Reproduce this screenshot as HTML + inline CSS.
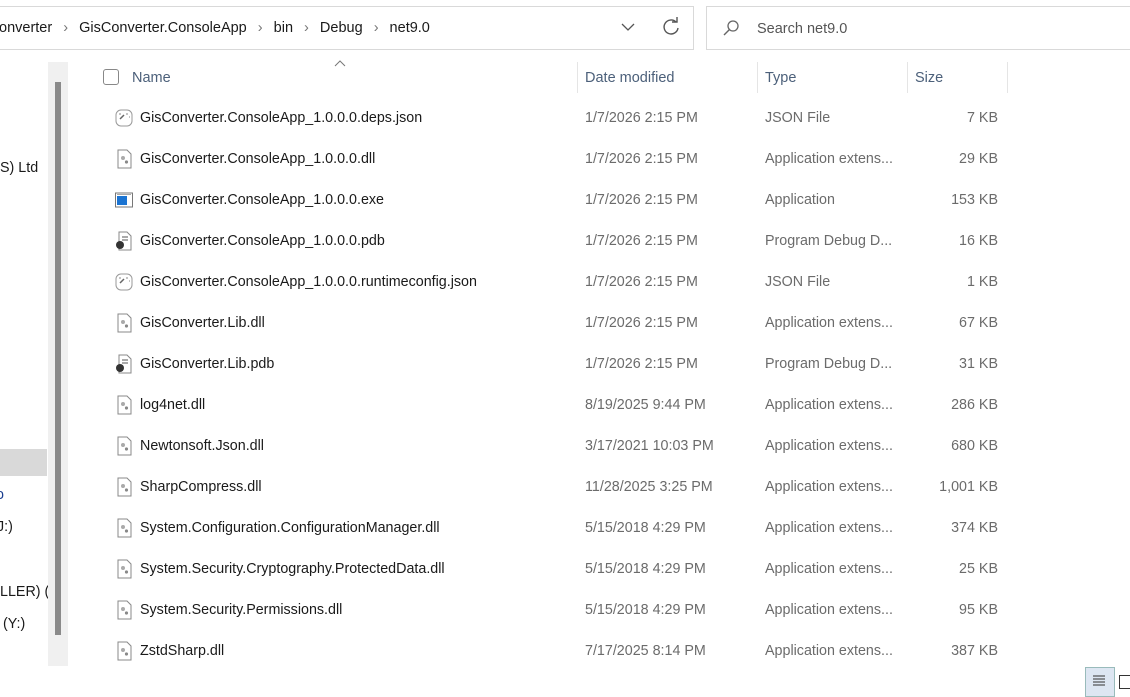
<!DOCTYPE html><html><head><style>
body{margin:0;width:1130px;height:695px;background:#fff;font-family:"Liberation Sans",sans-serif;font-size:14.3px;color:#1a1a1a;position:relative;overflow:hidden}
.a{position:absolute;white-space:nowrap}
.row{position:absolute;left:0;width:1010px;height:41px}
.row span{position:absolute;top:1px;line-height:41px}
.g{color:#6b6b6b}
.ic{position:absolute;left:115px;top:11px;width:18px;height:20px}
.s{color:#777;margin:0 7px}
</style></head><body>
<div class="a" style="left:-2px;top:6px;width:695px;height:42px;border:1px solid #d9d9d9;border-left:none"></div>
<div class="a" style="left:706px;top:6px;width:430px;height:42px;border:1px solid #d9d9d9"></div>
<div class="a" style="left:-1px;top:20px;font-size:14.5px">onverter <span class="s">›</span> GisConverter.ConsoleApp <span class="s">›</span> bin <span class="s">›</span> Debug <span class="s">›</span> net9.0</div>
<svg class="a" style="left:620px;top:20px" width="16" height="14"><path d="M2 4 L8 10 L14 4" fill="none" stroke="#555" stroke-width="1.3"/></svg>
<svg class="a" style="left:661px;top:17px" width="20" height="20"><path d="M15 5 A7 7 0 1 0 17 11" fill="none" stroke="#555" stroke-width="1.4"/><path d="M11 5 L16 5 L16 0" fill="none" stroke="#555" stroke-width="1.4"/></svg>
<svg class="a" style="left:722px;top:19px" width="18" height="18"><circle cx="11" cy="7" r="5" fill="none" stroke="#666" stroke-width="1.3"/><path d="M7.5 10.5 L2 16" stroke="#666" stroke-width="1.4"/></svg>
<div class="a" style="left:757px;top:21px;color:#555;font-size:14.5px">Search net9.0</div>
<!-- nav -->
<div class="a" style="left:0;top:160px">S) Ltd</div>
<div class="a" style="left:0;top:449px;width:47px;height:27px;background:#d9d9d9"></div>
<div class="a" style="left:-4px;top:487px;color:#1a3d8f">o</div>
<div class="a" style="left:-3px;top:519px">J:)</div>
<div class="a" style="left:0;top:584px">LLER) (S</div>
<div class="a" style="left:3px;top:616px">(Y:)</div>
<div class="a" style="left:48px;top:62px;width:20px;height:604px;background:#f0f0f0"></div>
<div class="a" style="left:55px;top:82px;width:6px;height:553px;background:#8a8a8a"></div>
<!-- header -->
<div class="a" style="left:103px;top:69px;width:14px;height:14px;border:1px solid #888;border-radius:3px"></div>
<svg class="a" style="left:334px;top:60px" width="12" height="8"><path d="M1 6 L6 1 L11 6" fill="none" stroke="#777"/></svg>
<div class="a" style="left:132px;top:70px;color:#4c607a;font-size:14.5px">Name</div>
<div class="a" style="left:585px;top:70px;color:#4c607a;font-size:14.5px">Date modified</div>
<div class="a" style="left:765px;top:70px;color:#4c607a;font-size:14.5px">Type</div>
<div class="a" style="left:915px;top:70px;color:#4c607a;font-size:14.5px">Size</div>
<div class="a" style="left:577px;top:62px;width:1px;height:31px;background:#e5e5e5"></div>
<div class="a" style="left:757px;top:62px;width:1px;height:31px;background:#e5e5e5"></div>
<div class="a" style="left:907px;top:62px;width:1px;height:31px;background:#e5e5e5"></div>
<div class="a" style="left:1007px;top:62px;width:1px;height:31px;background:#e5e5e5"></div>
<div id="rows"></div>
<div class="a" style="left:1085px;top:667px;width:28px;height:28px;background:#dde6f2;border:1px solid #9bb"></div>
<svg class="a" style="left:1091px;top:673px" width="16" height="16"><path d="M2 3H14M2 6H14M2 9H14M2 12H14" stroke="#333"/></svg>
<div class="a" style="left:1119px;top:675px;width:11px;height:12px;border:1px solid #333"></div>
<script>
const d=[["GisConverter.ConsoleApp_1.0.0.0.deps.json","1/7/2026 2:15 PM","JSON File","7 KB","j"],
["GisConverter.ConsoleApp_1.0.0.0.dll","1/7/2026 2:15 PM","Application extens...","29 KB","d"],
["GisConverter.ConsoleApp_1.0.0.0.exe","1/7/2026 2:15 PM","Application","153 KB","e"],
["GisConverter.ConsoleApp_1.0.0.0.pdb","1/7/2026 2:15 PM","Program Debug D...","16 KB","p"],
["GisConverter.ConsoleApp_1.0.0.0.runtimeconfig.json","1/7/2026 2:15 PM","JSON File","1 KB","j"],
["GisConverter.Lib.dll","1/7/2026 2:15 PM","Application extens...","67 KB","d"],
["GisConverter.Lib.pdb","1/7/2026 2:15 PM","Program Debug D...","31 KB","p"],
["log4net.dll","8/19/2025 9:44 PM","Application extens...","286 KB","d"],
["Newtonsoft.Json.dll","3/17/2021 10:03 PM","Application extens...","680 KB","d"],
["SharpCompress.dll","11/28/2025 3:25 PM","Application extens...","1,001 KB","d"],
["System.Configuration.ConfigurationManager.dll","5/15/2018 4:29 PM","Application extens...","374 KB","d"],
["System.Security.Cryptography.ProtectedData.dll","5/15/2018 4:29 PM","Application extens...","25 KB","d"],
["System.Security.Permissions.dll","5/15/2018 4:29 PM","Application extens...","95 KB","d"],
["ZstdSharp.dll","7/17/2025 8:14 PM","Application extens...","387 KB","d"]];
const ic={
j:'<svg class="ic" viewBox="0 0 18 20"><rect x="1" y="2" width="16" height="16" rx="5" fill="#fff" stroke="#999"/><path d="M5 11 L9 7" stroke="#666" stroke-width="1.5"/><path d="M4 6h2M12 5v2M14 9h1" stroke="#888"/></svg>',
d:'<svg class="ic" viewBox="0 0 18 20"><path d="M3 1H12L16 5V19H3Z" fill="#fff" stroke="#888"/><circle cx="8" cy="9" r="2" fill="#aaa"/><circle cx="11.5" cy="13" r="1.6" fill="#888"/></svg>',
e:'<svg class="ic" viewBox="0 0 18 20"><rect x="0.5" y="3" width="17" height="14" fill="#fff" stroke="#777"/><rect x="2" y="6" width="10" height="9" fill="#1b74d2"/><path d="M2 4.5H16" stroke="#aaa"/></svg>',
p:'<svg class="ic" viewBox="0 0 18 20"><path d="M4 1H12L16 5V19H4Z" fill="#fff" stroke="#888"/><path d="M7 6h6M7 9h6" stroke="#555"/><circle cx="5" cy="14" r="4" fill="#333"/></svg>'};
let h='';d.forEach((r,i)=>{h+=`<div class="row" style="top:${97+41*i}px">${ic[r[4]]}<span style="left:140px">${r[0]}</span><span class="g" style="left:585px">${r[1]}</span><span class="g" style="left:765px">${r[2]}</span><span class="g" style="right:12px">${r[3]}</span></div>`});
document.getElementById('rows').innerHTML=h;
</script>
</body></html>
